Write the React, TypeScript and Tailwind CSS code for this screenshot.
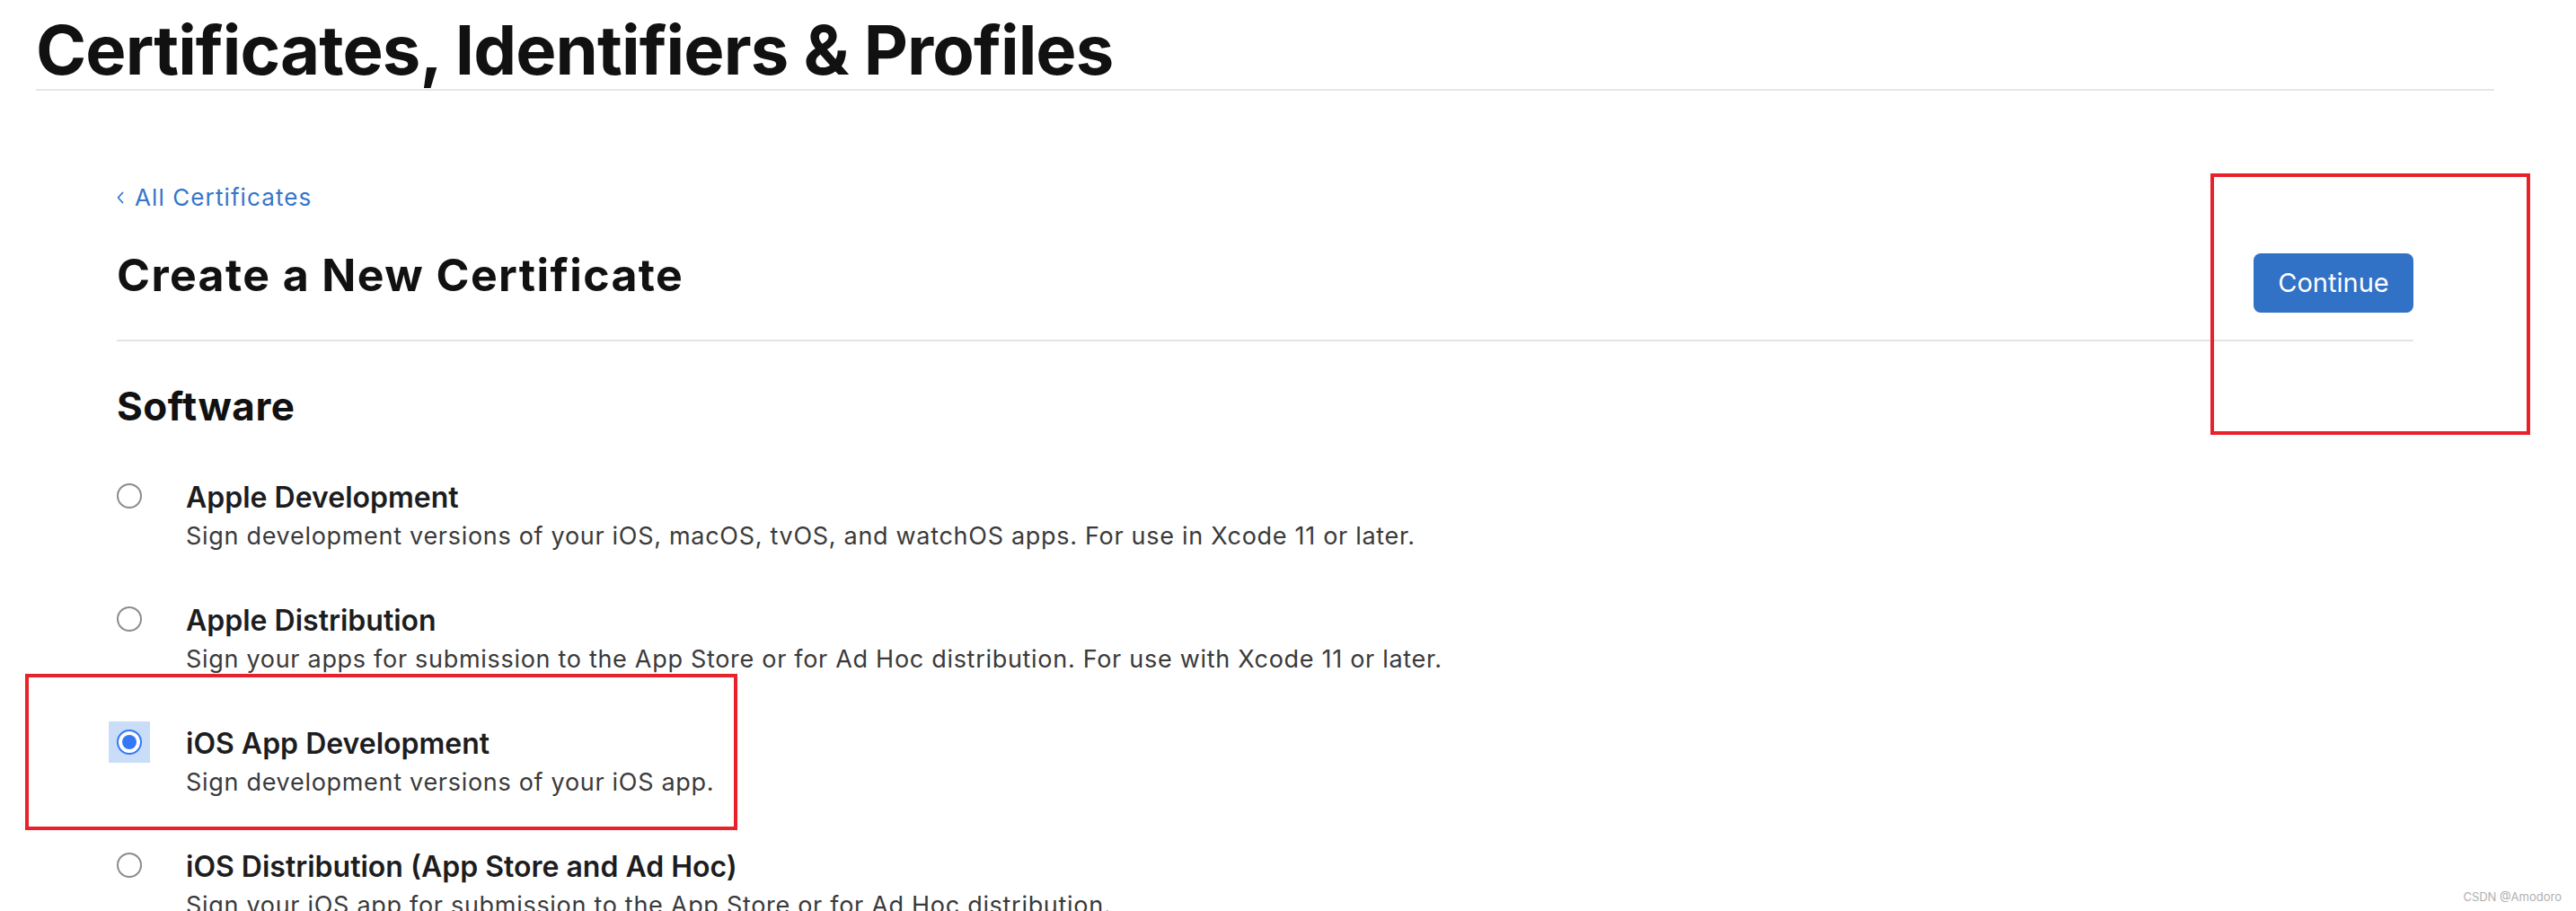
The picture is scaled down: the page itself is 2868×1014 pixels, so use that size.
import React from "react";

interface CertOption {
  title: string;
  description: string;
  selected?: boolean;
}

const options: CertOption[] = [
  {
    title: "Apple Development",
    description:
      "Sign development versions of your iOS, macOS, tvOS, and watchOS apps. For use in Xcode 11 or later.",
  },
  {
    title: "Apple Distribution",
    description:
      "Sign your apps for submission to the App Store or for Ad Hoc distribution. For use with Xcode 11 or later.",
  },
  {
    title: "iOS App Development",
    description: "Sign development versions of your iOS app.",
    selected: true,
  },
  {
    title: "iOS Distribution (App Store and Ad Hoc)",
    description: "Sign your iOS app for submission to the App Store or for Ad Hoc distribution.",
  },
];

const Radio: React.FC<{ checked?: boolean }> = ({ checked }) => {
  if (checked) {
    return (
      <div className="w-fit -m-[9px] p-[9px] bg-[#c9ddf9]">
        <div className="w-[28px] h-[28px] rounded-full border-2 border-[#3478f6] bg-white flex items-center justify-center">
          <div className="w-[16px] h-[16px] rounded-full bg-[#3478f6]" />
        </div>
      </div>
    );
  }
  return <div className="w-[28px] h-[28px] rounded-full border-2 border-[#8c8c8c] bg-white" />;
};

const App: React.FC = () => {
  return (
    <div
      className="relative h-[1014px] overflow-hidden bg-white pl-[40px] pr-[91px]"
      style={{ fontFamily: "Inter, 'Liberation Sans', sans-serif" }}
    >
      {/* page header */}
      <h1 className="pt-[17px] pb-[6px] text-[76px] leading-[76px] font-bold tracking-[-0.9px] text-[#111111] border-b-2 border-[#e6e6e6]">
        Certificates, Identifiers &amp; Profiles
      </h1>

      <div className="px-[90px]">
        <a className="mt-[106px] flex items-center gap-[12px] text-[26px] leading-[26px] tracking-[1.1px] text-[#3576cb]">
          <svg width="8" height="14" viewBox="0 0 8 14" fill="none">
            <path d="M6.5 1.5 L1.5 7 L6.5 12.5" stroke="#3576cb" strokeWidth="1.8" strokeLinecap="round" strokeLinejoin="round" />
          </svg>
          <span>All Certificates</span>
        </a>

        <div className="mt-[49px] pb-[30px] flex justify-between items-start border-b-2 border-[#e3e3e3]">
          <h2 className="-mt-[1px] text-[50px] leading-[50px] font-bold tracking-[1.4px] text-[#111111]">
            Create a New Certificate
          </h2>
          <button className="w-[178px] h-[66px] rounded-[8px] bg-[#3171c6] text-white text-[29px]">
            Continue
          </button>
        </div>

        <h3 className="mt-[48px] text-[44px] leading-[48px] font-bold tracking-[0.5px] text-[#111111]">Software</h3>

        <div className="mt-[58px] flex flex-col gap-[56px]">
          {options.map((opt) => (
            <div key={opt.title} className="flex">
              <div className="w-[77px] shrink-0 pt-[4px]">
                <Radio checked={opt.selected} />
              </div>
              <div>
                <div className="text-[32px] leading-[40px] font-semibold text-[#1d1d1f]">{opt.title}</div>
                <div className="mt-[5px] text-[27px] leading-[36px] tracking-[0.7px] text-[#3a3a3a]">{opt.description}</div>
              </div>
            </div>
          ))}
        </div>
      </div>

      {/* annotation boxes */}
      <div className="absolute left-[2461px] top-[193px] w-[356px] h-[291px] border-4 border-[#e8212b]" />
      <div className="absolute left-[28px] top-[750px] w-[793px] h-[174px] border-4 border-[#e8212b]" />

      <div className="absolute right-[16px] bottom-[6px] text-[13px] text-[#b0b0b0]">CSDN @Amodoro</div>
    </div>
  );
};

export default App;
